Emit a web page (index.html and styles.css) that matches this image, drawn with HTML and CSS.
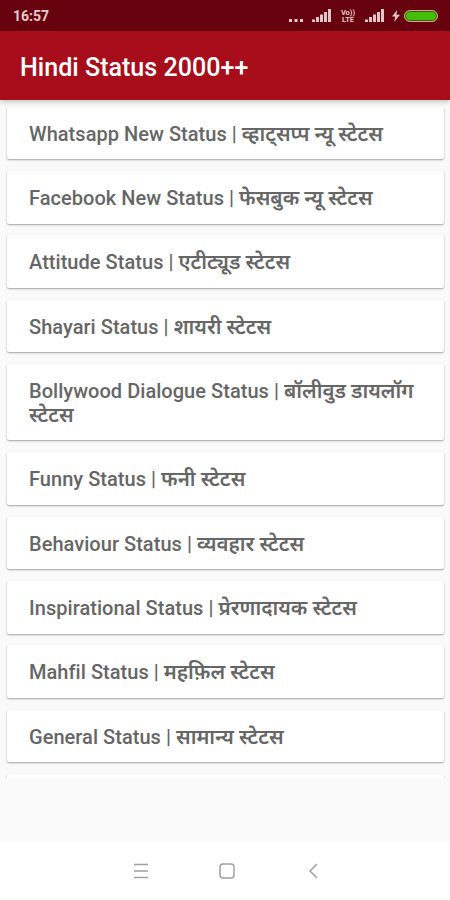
FILE: index.html
```html
<!DOCTYPE html>
<html lang="en">
<head>
    <meta charset="UTF-8">
    <meta name="viewport" content="width=device-width, initial-scale=1.0">
    <title>Hindi Status 2000++</title>
    <link rel="stylesheet" href="styles.css">
</head>
<body>
    <div class="statusbar">
        <span class="time">16:57</span>
        <div class="status-icons">
            <svg class="dots" width="15" height="14" viewBox="0 0 15 14">
                <path d="M0 9h3v3H0zM5.500 9h3v3h-3zM11 9h3v3h-3z"/>
            </svg>
            <svg class="signal" width="20" height="14" viewBox="0 0 20 14">
                <path d="M0 10.500h3v2.500H0zM4 8h3v5H4zM8 5.500h3v7.500H8zM12 3h3v10h-3zM16 0h3v13h-3z"/>
            </svg>
            <span class="volte"><span>Vo))</span><span>LTE</span></span>
            <svg class="signal" width="20" height="14" viewBox="0 0 20 14">
                <path d="M0 10.500h3v2.500H0zM4 8h3v5H4zM8 5.500h3v7.500H8zM12 3h3v10h-3zM16 0h3v13h-3z"/>
            </svg>
            <svg class="bolt" width="8" height="12" viewBox="0 0 8 12">
                <path d="M5 0L0 6.500h3.200L2.200 12 8 4.800H4.500z"/>
            </svg>
            <span class="battery"></span>
        </div>
    </div>

    <header>
        <h1>Hindi Status 2000++</h1>
    </header>

    <main>
        <div class="card">Whatsapp New Status | <span class="hindi" lang="hi">व्हाट्सप्प न्यू स्टेटस</span></div>
        <div class="card">Facebook New Status | <span class="hindi" lang="hi">फेसबुक न्यू स्टेटस</span></div>
        <div class="card">Attitude Status | <span class="hindi" lang="hi">एटीट्यूड स्टेटस</span></div>
        <div class="card">Shayari Status | <span class="hindi" lang="hi">शायरी स्टेटस</span></div>
        <div class="card">Bollywood Dialogue Status | <span class="hindi" lang="hi">बॉलीवुड डायलॉग स्टेटस</span></div>
        <div class="card">Funny Status | <span class="hindi" lang="hi">फनी स्टेटस</span></div>
        <div class="card">Behaviour Status | <span class="hindi" lang="hi">व्यवहार स्टेटस</span></div>
        <div class="card">Inspirational Status | <span class="hindi" lang="hi">प्रेरणादायक स्टेटस</span></div>
        <div class="card">Mahfil Status | <span class="hindi" lang="hi">महफ़िल स्टेटस</span></div>
        <div class="card">General Status | <span class="hindi" lang="hi">सामान्य स्टेटस</span></div>
        <div class="card"></div>
    </main>

    <nav>
        <svg width="16" height="16" viewBox="0 0 16 16">
            <path d="M1 1.500h14M1 8h14M1 14.500h14"/>
        </svg>
        <svg width="16" height="16" viewBox="0 0 16 16">
            <rect x="1" y="1" width="14" height="14" rx="3"/>
        </svg>
        <svg width="16" height="16" viewBox="0 0 16 16">
            <path d="M12 1L5 8l7 7"/>
        </svg>
    </nav>
</body>
</html>
```
FILE: styles.css
```css
:root {
--merah: #a70d1a;
--merah-tua: #67030e;
--latar: #fafafa;
--teks: #666666;
}

*,
*::before,
*::after {
box-sizing: border-box;
}

body {
font-family: Roboto, "Noto Sans", sans-serif;
background-color: var(--latar);
display: flex;
flex-direction: column;
height: 900px;
margin: 0;
overflow: hidden;
}

.statusbar {
display: flex;
justify-content: space-between;
align-items: center;
flex: none;
height: 31px;
padding: 1px 12px 0 13px;
background-color: var(--merah-tua);
color: #e8c9cb;
}

.time {
font-size: 14px;
font-weight: 700;
}

.status-icons {
display: flex;
align-items: center;
}

.status-icons svg {
fill: #e3c4c7;
}

.dots {
margin: 2px 8px 0 0;
}

.volte {
display: flex;
flex-direction: column;
width: 16px;
margin: 0 9px 0 8px;
font-size: 7.5px;
font-weight: 700;
line-height: 7px;
text-align: center;
}

.bolt {
margin: 0 4px 0 7px;
}

.battery {
width: 34px;
height: 12px;
border: 1.5px solid #cfaaa0;
border-radius: 6px;
background-color: #43bd08;
box-shadow: inset 0 0 0 1px #44560a;
}

header {
display: flex;
align-items: center;
flex: none;
height: 69px;
padding: 4px 20px 0;
background-color: var(--merah);
box-shadow: 0 2px 5px rgba(0, 0, 0, 0.22);
position: relative;
}

h1 {
margin: 0;
color: #ffffff;
font-size: 25.1px;
font-weight: 500;
}

main {
display: flex;
flex-direction: column;
gap: 11.8px;
height: 678px;
padding: 6.700px 6px 0 7px;
overflow: hidden;
}

.card {
flex: none;
min-height: 52.6px;
padding: 16px 20px 13px 22px;
background-color: #ffffff;
border-radius: 2px;
box-shadow: 0 1px 2px rgba(0, 0, 0, 0.36);
color: var(--teks);
font-size: 20px;
font-weight: 500;
letter-spacing: 0.04px;
line-height: 23.6px;
}

.hindi {
font-size: 20.5px;
font-weight: 600;
letter-spacing: 0;
line-height: 20px;
}

nav {
display: flex;
justify-content: center;
align-items: center;
gap: 70px;
height: 58px;
padding-left: 3px;
margin-top: auto;
background-color: #ffffff;
}

nav svg {
fill: none;
stroke: #a0a0a0;
stroke-width: 1.5;
}
```
